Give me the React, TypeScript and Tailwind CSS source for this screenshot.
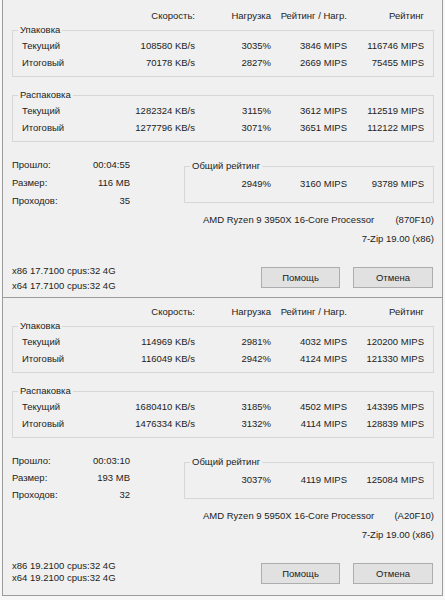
type Row = [string, string, string, string, string];

interface BenchData {
  pack: Row[];
  unpack: Row[];
  elapsed: string;
  size: string;
  passes: string;
  total: [string, string, string];
  cpu: string;
  cpuId: string;
  x86: string;
  x64: string;
}

const runs: BenchData[] = [
  {
    pack: [
      ['Текущий', '108580 KB/s', '3035%', '3846 MIPS', '116746 MIPS'],
      ['Итоговый', '70178 KB/s', '2827%', '2669 MIPS', '75455 MIPS'],
    ],
    unpack: [
      ['Текущий', '1282324 KB/s', '3115%', '3612 MIPS', '112519 MIPS'],
      ['Итоговый', '1277796 KB/s', '3071%', '3651 MIPS', '112122 MIPS'],
    ],
    elapsed: '00:04:55',
    size: '116 MB',
    passes: '35',
    total: ['2949%', '3160 MIPS', '93789 MIPS'],
    cpu: 'AMD Ryzen 9 3950X 16-Core Processor',
    cpuId: '(870F10)',
    x86: 'x86 17.7100 cpus:32 4G',
    x64: 'x64 17.7100 cpus:32 4G',
  },
  {
    pack: [
      ['Текущий', '114969 KB/s', '2981%', '4032 MIPS', '120200 MIPS'],
      ['Итоговый', '116049 KB/s', '2942%', '4124 MIPS', '121330 MIPS'],
    ],
    unpack: [
      ['Текущий', '1680410 KB/s', '3185%', '4502 MIPS', '143395 MIPS'],
      ['Итоговый', '1476334 KB/s', '3132%', '4114 MIPS', '128839 MIPS'],
    ],
    elapsed: '00:03:10',
    size: '193 MB',
    passes: '32',
    total: ['3037%', '4119 MIPS', '125084 MIPS'],
    cpu: 'AMD Ryzen 9 5950X 16-Core Processor',
    cpuId: '(A20F10)',
    x86: 'x86 19.2100 cpus:32 4G',
    x64: 'x64 19.2100 cpus:32 4G',
  },
];

const cols = 'grid grid-cols-[107px_75px_76px_76px_77px] text-right';

function Group({ title, rows, className }: { title: string; rows: Row[]; className: string }) {
  return (
    <fieldset className={`border border-[#d7d7d7] pb-[5px] ${className}`}>
      <legend className="ml-[5px] px-[2px] leading-[12px]">{title}</legend>
      <div className="pt-[1px]">
        {rows.map((r, i) => (
          <div key={i} className={`${cols} h-[17px] leading-[17px]`}>
            <span className="pl-[9px] text-left">{r[0]}</span>
            <span>{r[1]}</span>
            <span>{r[2]}</span>
            <span>{r[3]}</span>
            <span>{r[4]}</span>
          </div>
        ))}
      </div>
    </fieldset>
  );
}

interface PanelProps {
  d: BenchData;
  pt: string;
  info: string;
  xRow: string;
  xPb: string;
}

function Panel({ d, pt, info, xRow, xPb }: PanelProps) {
  return (
    <div className={`h-[298px] mx-[2px] border-x border-b border-[#9c9c9c] bg-[#f0f0f0] pl-[9px] pr-[8px] flex flex-col ${pt}`}>
      <div className={`${cols} pl-[1px] h-[14px] leading-[14px]`}>
        <span />
        <span>Скорость:</span>
        <span>Нагрузка</span>
        <span>Рейтинг / Нагр.</span>
        <span>Рейтинг</span>
      </div>

      <Group title="Упаковка" rows={d.pack} className="mt-[1px]" />
      <Group title="Распаковка" rows={d.unpack} className="mt-[12px]" />

      <div className="flex flex-1 mt-[14px] pb-[4px]">
        <div className={`w-[118px] flex flex-col ${xPb}`}>
          {[
            ['Прошло:', d.elapsed],
            ['Размер:', d.size],
            ['Проходов:', d.passes],
          ].map(([k, v]) => (
            <div key={k} className={`flex justify-between ${info}`}>
              <span>{k}</span>
              <span>{v}</span>
            </div>
          ))}
          <div className="mt-auto whitespace-nowrap">
            <div className={xRow}>{d.x86}</div>
            <div className={xRow}>{d.x64}</div>
          </div>
        </div>

        <div className="ml-[54px] w-[250px] flex flex-col">
          <fieldset className="mt-[4px] border border-[#d7d7d7] pb-[10px]">
            <legend className="ml-[5px] px-[2px] leading-[12px]">Общий рейтинг</legend>
            <div className="grid grid-cols-[10px_76px_76px_77px] text-right pt-[3px] h-[20px] leading-[17px]">
              <span />
              <span>{d.total[0]}</span>
              <span>{d.total[1]}</span>
              <span>{d.total[2]}</span>
            </div>
          </fieldset>
          <div className="mt-[10px] flex justify-between pl-[19px] h-[14px] leading-[14px]">
            <span>{d.cpu}</span>
            <span>{d.cpuId}</span>
          </div>
          <div className="mt-[5px] text-right h-[14px] leading-[14px]">7-Zip 19.00 (x86)</div>
          <div className="mt-[21px] flex justify-end gap-[13px] pr-[1px]">
            <button className="w-[79px] h-[21px] bg-[#e1e1e1] border border-[#adadad] leading-[19px]">Помощь</button>
            <button className="w-[80px] h-[21px] bg-[#e1e1e1] border border-[#adadad] leading-[19px]">Отмена</button>
          </div>
        </div>
      </div>
    </div>
  );
}

export default function App() {
  return (
    <div className="min-h-[600px] w-[445px] bg-[#f7f7f7] text-[#222] text-[9.5px] font-['Liberation_Sans',Arial,sans-serif]">
      <Panel d={runs[0]} pt="pt-[9px]" info="h-[18px] leading-[18px]" xRow="leading-[15px]" xPb="pb-0" />
      <Panel d={runs[1]} pt="pt-[7px]" info="h-[17px] leading-[17px]" xRow="leading-[12px]" xPb="pb-[7px]" />
    </div>
  );
}
